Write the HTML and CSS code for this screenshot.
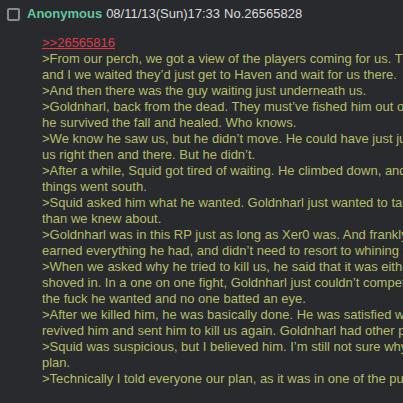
FILE: index.html
```html
<!DOCTYPE html>
<html>
<head>
<meta charset="utf-8">
<link rel="stylesheet" href="styles.css">
</head>
<body>
<div class="post">
  <div class="post-info">
    <span class="checkbox"></span>
    <span class="name">Anonymous</span>
    <span class="date">08/11/13(Sun)17:33</span>
    <span class="num">No.26565828</span>
  </div>
  <blockquote class="message">
    <a class="quotelink" href="#">&gt;&gt;26565816</a><br>
    <span class="quote">&gt;From our perch, we got a view of the players coming for us. They knew where we were</span><br>
    <span class="quote">and I we waited they’d just get to Haven and wait for us there.</span><br>
    <span class="quote">&gt;And then there was the guy waiting just underneath us.</span><br>
    <span class="quote">&gt;Goldnharl, back from the dead. They must’ve fished him out of the river, or</span><br>
    <span class="quote">he survived the fall and healed. Who knows.</span><br>
    <span class="quote">&gt;We know he saw us, but he didn’t move. He could have just jumped up and killed</span><br>
    <span class="quote">us right then and there. But he didn’t.</span><br>
    <span class="quote">&gt;After a while, Squid got tired of waiting. He climbed down, and</span><br>
    <span class="quote">things went south.</span><br>
    <span class="quote">&gt;Squid asked him what he wanted. Goldnharl just wanted to talk. He knew more</span><br>
    <span class="quote">than we knew about.</span><br>
    <span class="quote">&gt;Goldnharl was in this RP just as long as Xer0 was. And frankly, he</span><br>
    <span class="quote">earned everything he had, and didn’t need to resort to whining to</span><br>
    <span class="quote">&gt;When we asked why he tried to kill us, he said that it was either that or</span><br>
    <span class="quote">shoved in. In a one on one fight, Goldnharl just couldn’t compete with</span><br>
    <span class="quote">the fuck he wanted and no one batted an eye.</span><br>
    <span class="quote">&gt;After we killed him, he was basically done. He was satisfied with</span><br>
    <span class="quote">revived him and sent him to kill us again. Goldnharl had other plans.</span><br>
    <span class="quote">&gt;Squid was suspicious, but I believed him. I’m still not sure why</span><br>
    <span class="quote">plan.</span><br>
    <span class="quote">&gt;Technically I told everyone our plan, as it was in one of the public threads.</span>
  </blockquote>
</div>
</body>
</html>
```

FILE: styles.css
```css
html, body {
  margin: 0;
  padding: 0;
  background: #282a2e;
  overflow: hidden;
}

body {
  font-family: "Liberation Sans", Arial, sans-serif;
  font-size: 13px;
  line-height: 16px;
  color: #dcdcdc;
}

.post {
  padding-top: 6px;
}

.post-info {
  display: flex;
  align-items: center;
  height: 16px;
  padding-left: 7px;
  white-space: nowrap;
}

.checkbox {
  display: inline-block;
  box-sizing: border-box;
  width: 13px;
  height: 13px;
  border: 2px solid #8a8b8d;
  border-radius: 2px;
  margin-right: 7px;
}

.name {
  font-weight: bold;
  color: #63c79b;
  margin-right: 4px;
}

.date {
  margin-right: 4px;
}

.message {
  margin: 13px 0 0 42px;
  white-space: nowrap;
  color: #b5bd68;
}

.quotelink {
  color: #dd3a47;
  text-decoration: underline;
}

.quote {
  color: #b5bd68;
}
```
